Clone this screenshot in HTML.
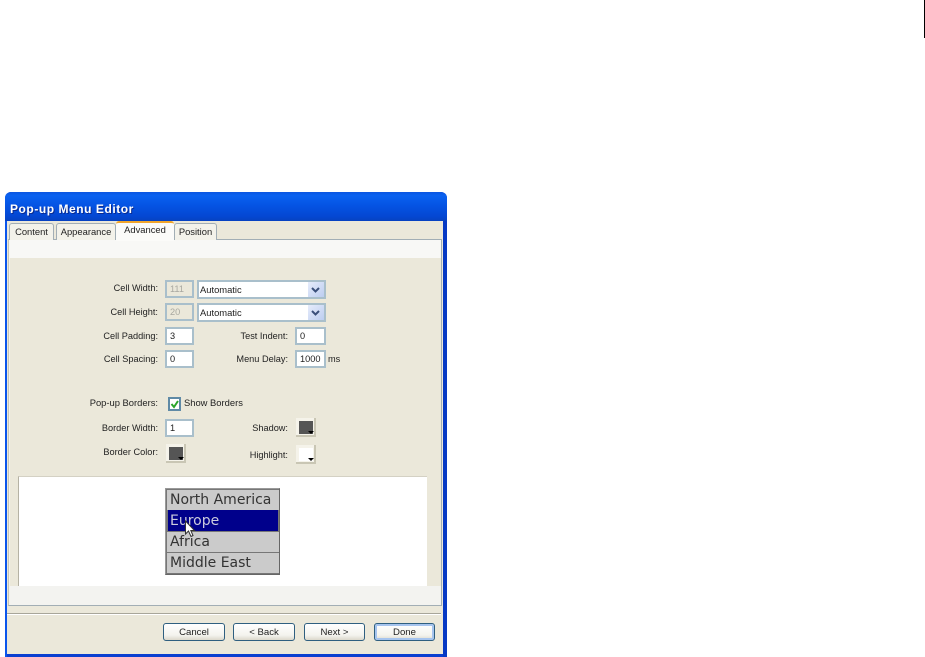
<!DOCTYPE html>
<html><head><meta charset="utf-8"><style>
html,body{margin:0;padding:0;background:#fff;width:925px;height:657px;overflow:hidden}
body{position:relative;font:9.2px/12px "Liberation Sans",sans-serif;color:#222}
div,span{position:absolute;box-sizing:border-box}
.l{text-align:right;white-space:nowrap;filter:blur(.25px)}
.i{background:#fff;border:2px solid #a9bfcb;padding-left:3px;font-size:9.2px;line-height:14px;color:#222}
.d{background:#ebe8da;color:#a8a8a0;border-color:#a9bfcb}
.s{background:#fff;border:2px solid #a9bfcb;padding-left:1px;font-size:9.4px;line-height:16px;color:#222}
.a{right:0;top:0;width:16px;height:15px;background:linear-gradient(135deg,#e6ecfb,#bccdf0)}
.sw{width:20px;height:19px;background:#f5f3ea;border-right:2px solid #c9c6b4;border-bottom:2px solid #c9c6b4}
.sw i{position:absolute;left:3px;top:3px;width:14px;height:13px;display:block}
.sw b{position:absolute;right:0;bottom:1px;width:0;height:0;border:3px solid transparent;border-top:3px solid #000;border-bottom:0}
.t{background:#f3f2ea;border:1px solid #a2aeb5;border-bottom:0;border-radius:3px 3px 0 0;text-align:center;line-height:16px;color:#222;font-size:9.4px;filter:blur(.2px)}
.b{height:18px;border:1px solid #2f5f80;border-radius:3px;background:linear-gradient(#fff,#f4f3ee 70%,#dcd8cb);text-align:center;line-height:17px;color:#222;font-size:9.6px}
.m{left:1px;width:112px;font:14px/20px "DejaVu Sans",sans-serif;color:#333;padding-left:3px;background:#cbcbcb;white-space:nowrap;filter:blur(.2px)}
</style></head><body>
<div style="left:924px;top:0;width:1px;height:38px;background:#000"></div>

<div style="left:5px;top:192px;width:442px;height:465px;background:#0a3fd0;border-radius:6px 6px 0 0"></div>
<div style="left:5px;top:192px;width:442px;height:29px;border-radius:6px 6px 0 0;background:linear-gradient(#0b55e0,#0a62f0 12%,#0554e4 45%,#0447d2 85%,#0642c0)"></div>
<div style="left:443px;top:221px;width:4px;height:436px;background:#0639c4"></div>
<div style="left:5px;top:221px;width:2px;height:436px;background:#0a55ec"></div>
<div style="left:10px;top:202px;font:bold 12px/15px 'Liberation Sans',sans-serif;letter-spacing:.55px;color:#fff;text-shadow:1px 1px 0 #0a2a90;white-space:nowrap">Pop-up Menu Editor</div>

<div style="left:7px;top:221px;width:436px;height:433px;background:#ebe8da"></div>

<div style="left:8px;top:239px;width:434px;height:367px;background:#f3f3f0;border:1px solid #a2aeb5;border-left-color:#c9c6b4"></div>
<div style="left:9px;top:240px;width:432px;height:18px;background:#f8f8f6"></div>
<div style="left:10px;top:258px;width:431px;height:328px;background:#ebe8da"></div>

<div class="t" style="left:9px;top:223px;width:45px;height:17px">Content</div>
<div class="t" style="left:56px;top:223px;width:60px;height:17px">Appearance</div>
<div class="t" style="left:174px;top:223px;width:43px;height:17px">Position</div>
<div class="t" style="left:116px;top:221px;width:58px;height:20px;background:#fbfbf9;border:0;border-top:2px solid #f0a52c;line-height:14px">Advanced</div>

<div class="l" style="left:60px;top:282px;width:98px">Cell Width:</div>
<div class="i d" style="left:165px;top:280px;width:29px;height:18px">111</div>
<div class="s" style="left:197px;top:280px;width:129px;height:19px">Automatic<span class="a"></span><svg style="position:absolute;right:4px;top:5px" width="9" height="6"><path d="M1 1L4.500 4.500L8 1" fill="none" stroke="#3a4f7a" stroke-width="2"/></svg></div>

<div class="l" style="left:60px;top:306px;width:98px">Cell Height:</div>
<div class="i d" style="left:165px;top:303px;width:29px;height:18px">20</div>
<div class="s" style="left:197px;top:303px;width:129px;height:19px">Automatic<span class="a"></span><svg style="position:absolute;right:4px;top:5px" width="9" height="6"><path d="M1 1L4.500 4.500L8 1" fill="none" stroke="#3a4f7a" stroke-width="2"/></svg></div>

<div class="l" style="left:60px;top:330px;width:98px">Cell Padding:</div>
<div class="i" style="left:165px;top:327px;width:29px;height:18px">3</div>
<div class="l" style="left:200px;top:330px;width:88px">Test Indent:</div>
<div class="i" style="left:295px;top:327px;width:31px;height:18px">0</div>

<div class="l" style="left:60px;top:353px;width:98px">Cell Spacing:</div>
<div class="i" style="left:165px;top:350px;width:29px;height:18px">0</div>
<div class="l" style="left:200px;top:353px;width:88px">Menu Delay:</div>
<div class="i" style="left:295px;top:350px;width:31px;height:18px">1000</div>
<div class="l" style="left:328px;top:353px;text-align:left">ms</div>

<div class="l" style="left:60px;top:397px;width:98px;font-size:9.4px">Pop-up Borders:</div>
<div style="left:168px;top:397px;width:13px;height:14px;background:#fff;border:2px solid #5f8aa6"></div>
<svg style="position:absolute;left:168px;top:397px" width="13" height="14"><path d="M3.500 7L6 10L10 4" fill="none" stroke="#2aa52a" stroke-width="2"/></svg>
<div class="l" style="left:184px;top:397px;text-align:left;font-size:9.4px">Show Borders</div>

<div class="l" style="left:60px;top:422px;width:98px">Border Width:</div>
<div class="i" style="left:165px;top:419px;width:29px;height:18px">1</div>
<div class="l" style="left:200px;top:422px;width:88px">Shadow:</div>
<div class="sw" style="left:296px;top:418px"><i style="background:#555"></i><b></b></div>

<div class="l" style="left:60px;top:446px;width:98px">Border Color:</div>
<div class="sw" style="left:166px;top:444px"><i style="background:#555"></i><b></b></div>
<div class="l" style="left:200px;top:449px;width:88px">Highlight:</div>
<div class="sw" style="left:296px;top:445px"><i style="background:#fff"></i><b></b></div>

<div style="left:18px;top:476px;width:409px;height:110px;background:#fff;border-top:1px solid #d4d1c4;border-left:1px solid #b5b2a4"></div>

<div style="left:165px;top:488px;width:115px;height:87px;background:#777;border:1px solid #999;border-right:1px solid #666;border-bottom:1px solid #666">
<div class="m" style="top:1px;height:20px">North America</div>
<div class="m" style="top:21px;height:21px;background:#00008b;color:#ccd;line-height:22px;margin-left:1px;width:110px;padding-left:2px">Europe</div>
<div class="m" style="top:43px;height:20px">Africa</div>
<div class="m" style="top:64px;height:20px">Middle East</div>
</div>
<svg style="position:absolute;left:184px;top:520px" width="12" height="18"><path d="M1.500 1V14L4.500 11L7 16.500L9 15.500L6.800 10.500H10.500Z" fill="#fff" stroke="#333" stroke-width="1"/></svg>

<div style="left:7px;top:613px;width:434px;height:1px;background:#a8a69a"></div>
<div style="left:7px;top:614px;width:434px;height:1px;background:#fff"></div>

<div class="b" style="left:163px;top:623px;width:62px">Cancel</div>
<div class="b" style="left:233px;top:623px;width:62px">&lt; Back</div>
<div class="b" style="left:304px;top:623px;width:61px">Next &gt;</div>
<div class="b" style="left:374px;top:623px;width:61px;box-shadow:inset 0 0 0 2px #a6c4ee">Done</div>
</body></html>
